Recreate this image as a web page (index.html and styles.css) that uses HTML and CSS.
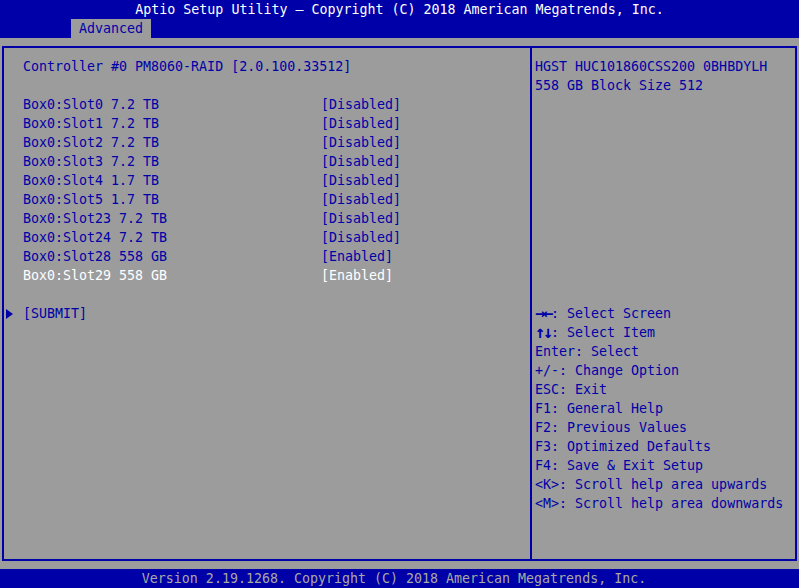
FILE: index.html
```html
<!DOCTYPE html>
<html lang="en">
<head>
    <meta charset="UTF-8">
    <meta name="viewport" content="width=device-width, initial-scale=1.0">
    <title>Aptio Setup Utility</title>
    <link rel="stylesheet" href="styles.css">
</head>
<body>
    <div class="screen">
        <div class="header">
            <div class="title">Aptio Setup Utility – Copyright (C) 2018 American Megatrends, Inc.</div>
            <div class="tabs">
                <span class="tab">Advanced</span>
            </div>
        </div>

        <div class="main">
            <div class="frame">
                <div class="left">
                    <div class="row">Controller #0 PM8060-RAID [2.0.100.33512]</div>
                    <div class="row"></div>
                    <div class="grid">
                        <span>Box0:Slot0 7.2 TB</span><span>[Disabled]</span>
                        <span>Box0:Slot1 7.2 TB</span><span>[Disabled]</span>
                        <span>Box0:Slot2 7.2 TB</span><span>[Disabled]</span>
                        <span>Box0:Slot3 7.2 TB</span><span>[Disabled]</span>
                        <span>Box0:Slot4 1.7 TB</span><span>[Disabled]</span>
                        <span>Box0:Slot5 1.7 TB</span><span>[Disabled]</span>
                        <span>Box0:Slot23 7.2 TB</span><span>[Disabled]</span>
                        <span>Box0:Slot24 7.2 TB</span><span>[Disabled]</span>
                        <span>Box0:Slot28 558 GB</span><span>[Enabled]</span>
                        <span class="sel">Box0:Slot29 558 GB</span><span class="sel">[Enabled]</span>
                    </div>
                    <div class="row"></div>
                    <div class="row submit">
                        <svg class="arrow" width="7" height="10" viewBox="0 0 7 10"><polygon points="0,0 7,5 0,10" fill="#0000a8"/></svg>[SUBMIT]
                    </div>
                </div>
                <div class="right">
                    <div class="info">
                        <div class="row">HGST HUC101860CSS200 0BHBDYLH</div>
                        <div class="row">558 GB Block Size 512</div>
                    </div>
                    <div class="help">
                        <div class="row"><b>→←</b>: Select Screen</div>
                        <div class="row"><b>↑↓</b>: Select Item</div>
                        <div class="row">Enter: Select</div>
                        <div class="row">+/-: Change Option</div>
                        <div class="row">ESC: Exit</div>
                        <div class="row">F1: General Help</div>
                        <div class="row">F2: Previous Values</div>
                        <div class="row">F3: Optimized Defaults</div>
                        <div class="row">F4: Save &amp; Exit Setup</div>
                        <div class="row">&lt;K&gt;: Scroll help area upwards</div>
                        <div class="row">&lt;M&gt;: Scroll help area downwards</div>
                    </div>
                </div>
            </div>
        </div>

        <div class="footer">Version 2.19.1268. Copyright (C) 2018 American Megatrends, Inc.</div>
    </div>
</body>
</html>
```

FILE: styles.css
```css
body {
    margin: 0;
    background-color: #9c9c9c;
}
.screen {
    width: 799px;
    height: 588px;
    display: flex;
    flex-direction: column;
    overflow: hidden;
    font-family: "DejaVu Sans Mono", "Liberation Mono", monospace;
    font-size: 13.3px;
    line-height: 19px;
    color: #0000a8;
    white-space: nowrap;
}
.header {
    background-color: #0000a8;
}
.title {
    height: 19px;
    text-align: center;
    color: #ffffff;
}
.tabs {
    height: 19px;
    padding-left: 71px;
}
.tab {
    display: inline-block;
    width: 80px;
    height: 19px;
    text-align: center;
    background-color: #9c9c9c;
    color: #0000a8;
}
.main {
    flex: 1;
    display: flex;
    padding: 8px 2px;
}
.frame {
    flex: 1;
    display: flex;
    border: 2px solid #0000a8;
}
.row {
    height: 19px;
}
.left {
    width: 507px;
    padding: 9px 0 0 19px;
}
.grid {
    display: grid;
    grid-template-columns: 298px auto;
    grid-auto-rows: 19px;
}
.sel {
    color: #ffffff;
}
.submit {
    display: flex;
    align-items: center;
}
.arrow {
    margin-left: -17px;
    margin-right: 10px;
}
.right {
    flex: 1;
    border-left: 2px solid #0000a8;
    padding: 9px 0 0 3px;
}
.info {
    height: 247px;
}
.help b {
    display: inline-block;
    width: 16px;
    font-size: 17px;
    line-height: 19px;
    vertical-align: top;
    font-weight: bold;
    letter-spacing: -2.2px;
}
.footer {
    height: 19px;
    background-color: #0000a8;
    color: #aaa8a2;
    text-align: center;
    padding-right: 11px;
}
```
